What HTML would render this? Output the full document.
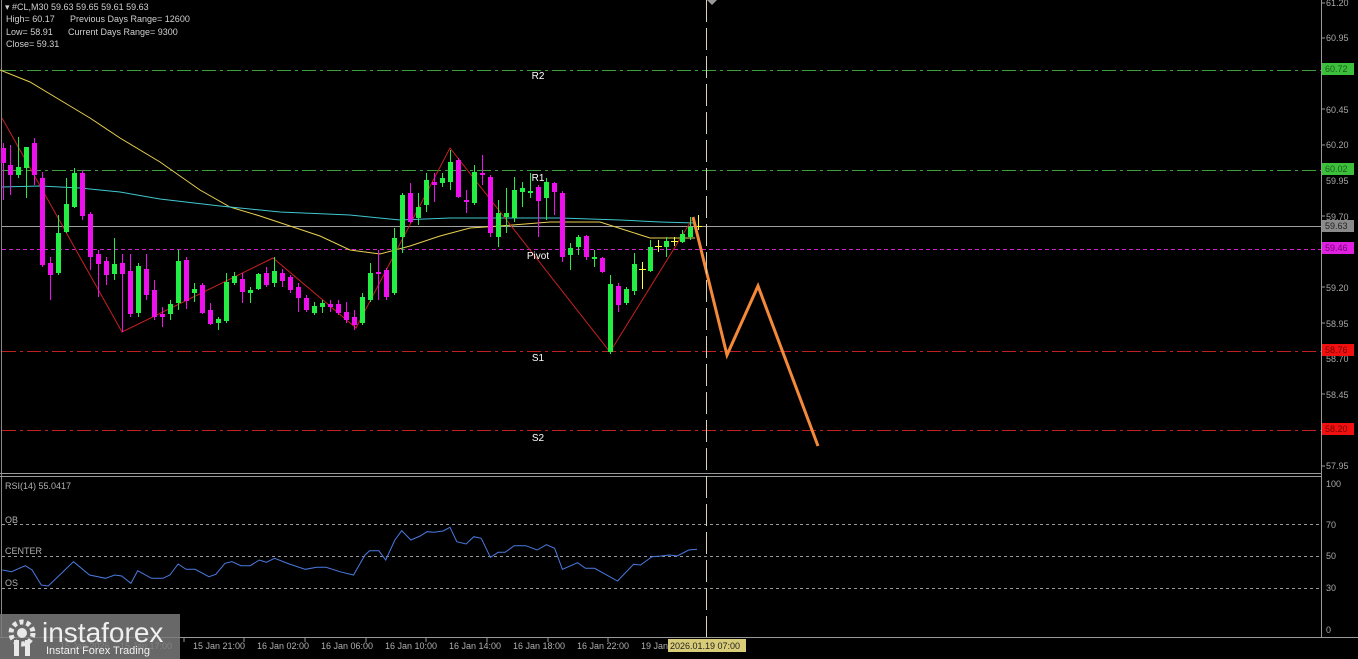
<!DOCTYPE html>
<html><head><meta charset="utf-8">
<style>
html,body{margin:0;padding:0;background:#000;width:1358px;height:659px;overflow:hidden}
svg{display:block;font-family:"Liberation Sans",sans-serif}
</style></head>
<body>
<svg id="s" width="1358" height="659" viewBox="0 0 1358 659" xmlns="http://www.w3.org/2000/svg">
<rect width="1358" height="659" fill="#000"/>
<!-- frames -->
<line x1="1.5" y1="0" x2="1.5" y2="637" stroke="#888"/>
<line x1="1321.5" y1="0" x2="1321.5" y2="637" stroke="#999"/>
<line x1="0" y1="473.5" x2="1322" y2="473.5" stroke="#999"/>
<line x1="0" y1="476.5" x2="1322" y2="476.5" stroke="#999"/>
<line x1="0" y1="637.5" x2="1358" y2="637.5" stroke="#999"/>
<!-- level lines -->
<line x1="2" y1="70.5" x2="1321" y2="70.5" stroke="#3aa03a" stroke-dasharray="14,4,3,4"/>
<line x1="2" y1="170.5" x2="1321" y2="170.5" stroke="#3aa03a" stroke-dasharray="14,4,3,4"/>
<line x1="2" y1="226.5" x2="1321" y2="226.5" stroke="#a0a0a0"/>
<line x1="2" y1="249.5" x2="1321" y2="249.5" stroke="#d020d0" stroke-dasharray="4,3"/>
<line x1="2" y1="351.5" x2="1321" y2="351.5" stroke="#c02020" stroke-dasharray="14,4,3,4"/>
<line x1="2" y1="430.5" x2="1321" y2="430.5" stroke="#c02020" stroke-dasharray="14,4,3,4"/>
<!-- RSI levels -->
<line x1="2" y1="524.5" x2="1321" y2="524.5" stroke="#999" stroke-dasharray="3,3"/>
<line x1="2" y1="556.5" x2="1321" y2="556.5" stroke="#999" stroke-dasharray="3,3"/>
<line x1="2" y1="588.5" x2="1321" y2="588.5" stroke="#999" stroke-dasharray="3,3"/>
<!-- MAs -->
<polyline fill="none" stroke="#e8d050" stroke-width="1" points="0,70 30,82 60,100 90,118 120,138 160,162 200,190 230,207 260,216 290,226 320,236 350,250 380,254 410,246 440,236 470,228 500,226 550,222 600,222 625,230 650,238 695,238"/>
<polyline fill="none" stroke="#40c8d0" stroke-width="1" points="2,187 40,186 80,188 120,192 160,199 220,206 280,212 350,215 400,220 450,218 500,218 560,218 620,220 660,222 695,223"/>
<!-- zigzag -->
<polyline fill="none" stroke="#c82020" stroke-width="1" points="2,118 122,332 273,258 356,328 450,148 610,352 693,218"/>
<g id="candles"></g>
<!-- forecast -->
<polyline fill="none" stroke="#f5893a" stroke-width="3" stroke-linejoin="miter" points="693,217 727,355 758,286 818,446"/>
<!-- vertical line -->
<line x1="706.5" y1="0" x2="706.5" y2="637" stroke="#d8d4b0" stroke-dasharray="22,6"/>
<polygon points="707,0 717,0 712,5" fill="#999"/>
<!-- RSI -->
<polyline id="rsi" fill="none" stroke="#4a7ae0" stroke-width="1"/>
<!-- labels -->
<g fill="#fff" font-size="10" text-anchor="middle">
<text x="538" y="79">R2</text><text x="538" y="181">R1</text><text x="538" y="259">Pivot</text>
<text x="538" y="361">S1</text><text x="538" y="441">S2</text>
</g>
<g fill="#d0d0d0" font-size="9">
<text x="5" y="10">▾ #CL,M30  59.63 59.65 59.61 59.63</text>
<text x="6" y="22">High= 60.17</text><text x="70" y="22">Previous Days Range= 12600</text>
<text x="6" y="35">Low= 58.91</text><text x="68" y="35">Current Days Range= 9300</text>
<text x="6" y="47">Close= 59.31</text>
<text x="5" y="489" fill="#b0b0b0">RSI(14) 55.0417</text>
<text x="5" y="523" fill="#b0b0b0">OB</text>
<text x="5" y="554" fill="#b0b0b0">CENTER</text>
<text x="5" y="586" fill="#b0b0b0">OS</text>
</g>
<!-- price axis -->
<g fill="#a8a8a8" font-size="9">
<text x="1326" y="6">61.20</text><text x="1326" y="41">60.95</text><text x="1326" y="113">60.45</text>
<text x="1326" y="148">60.20</text><text x="1326" y="184">59.95</text><text x="1326" y="220">59.70</text>
<text x="1326" y="291">59.20</text><text x="1326" y="327">58.95</text><text x="1326" y="362">58.70</text>
<text x="1326" y="398">58.45</text><text x="1326" y="469">57.95</text>
<text x="1326" y="487">100</text><text x="1326" y="528">70</text><text x="1326" y="559">50</text>
<text x="1326" y="591">30</text><text x="1326" y="633">0</text>
</g>
<g stroke="#999"><line x1="1322" y1="3" x2="1325" y2="3"/><line x1="1322" y1="38" x2="1325" y2="38"/><line x1="1322" y1="109" x2="1325" y2="109"/><line x1="1322" y1="145" x2="1325" y2="145"/><line x1="1322" y1="216" x2="1325" y2="216"/><line x1="1322" y1="287" x2="1325" y2="287"/><line x1="1322" y1="323" x2="1325" y2="323"/><line x1="1322" y1="394" x2="1325" y2="394"/><line x1="1322" y1="466" x2="1325" y2="466"/></g>
<rect x="1322" y="63" width="32" height="12" fill="#3cc03c"/><text x="1325" y="72" font-size="9" fill="#1a5a1a">60.72</text>
<rect x="1322" y="163" width="32" height="12" fill="#3cc03c"/><text x="1325" y="172" font-size="9" fill="#1a5a1a">60.02</text>
<rect x="1322" y="220" width="32" height="12" fill="#8a8a8a"/><text x="1325" y="229" font-size="9" fill="#222">59.63</text>
<rect x="1322" y="242" width="32" height="12" fill="#e020e0"/><text x="1325" y="251" font-size="9" fill="#700070">59.46</text>
<rect x="1322" y="344" width="32" height="12" fill="#f01010"/><text x="1325" y="353" font-size="9" fill="#700">58.76</text>
<rect x="1322" y="423" width="32" height="12" fill="#f01010"/><text x="1325" y="432" font-size="9" fill="#700">58.20</text>
<!-- time axis -->
<g fill="#b0b0b0" font-size="9">
<text x="193" y="649">15 Jan 21:00</text><text x="257" y="649">16 Jan 02:00</text><text x="321" y="649">16 Jan 06:00</text>
<text x="385" y="649">16 Jan 10:00</text><text x="449" y="649">16 Jan 14:00</text><text x="513" y="649">16 Jan 18:00</text>
<text x="577" y="649">16 Jan 22:00</text><text x="641" y="649">19 Jan</text>
<text x="60" y="649">15 Jan 2026</text><text x="120" y="649">15 Jan 17:00</text>
</g>
<g stroke="#999"><line x1="184" y1="638" x2="184" y2="642"/><line x1="244" y1="638" x2="244" y2="642"/><line x1="305" y1="638" x2="305" y2="642"/><line x1="366" y1="638" x2="366" y2="642"/><line x1="426" y1="638" x2="426" y2="642"/><line x1="487" y1="638" x2="487" y2="642"/><line x1="548" y1="638" x2="548" y2="642"/><line x1="608" y1="638" x2="608" y2="642"/></g>
<rect x="668" y="639" width="78" height="13" fill="#d8cc78"/>
<text x="670" y="649" font-size="9" fill="#222">2026.01.19 07:00</text>
<!-- logo -->
<rect x="0" y="614" width="180" height="45" fill="#7a7a7a" fill-opacity="0.85"/>
<g fill="#e8e8e8">
<circle cx="22" cy="633" r="11" fill="none" stroke="#e8e8e8" stroke-width="5" stroke-dasharray="4,3"/>
<circle cx="22" cy="633" r="5"/>
<rect x="14" y="640" width="5" height="16"/><rect x="25" y="640" width="5" height="16"/>
</g>
<text x="42" y="642" font-size="28" fill="#f0f0f0">instaforex</text>
<text x="46" y="654" font-size="11" fill="#f0f0f0">Instant Forex Trading</text>
</svg>
<script>
var C=[
[3,'m',148,163,143,200],[10,'m',165,175,145,195],[18,'g',167,175,137,178],[26,'g',147,168,147,198],[34,'m',143,175,138,185],
[42,'m',178,265,172,267],[50,'m',263,275,257,300],[58,'g',233,273,215,275],[66,'g',204,232,178,233],[74,'g',173,207,168,208],
[82,'m',173,216,170,220],[90,'m',214,257,212,270],[98,'m',254,264,250,297],[106,'m',261,275,257,285],[114,'g',264,274,238,280],
[122,'m',263,274,254,332],[130,'m',271,314,254,317],[138,'g',266,313,263,317],[146,'m',269,295,254,300],[154,'m',290,317,280,320],
[162,'m',314,317,307,327],[170,'g',304,314,300,320],[178,'g',261,303,250,310],[186,'m',260,301,257,309],[194,'g',289,293,283,302],
[202,'m',285,313,283,314],[210,'m',310,324,303,325],[218,'g',319,323,317,330],[226,'g',282,321,273,323],[234,'g',276,283,272,285],
[242,'m',279,292,273,303],[250,'g',290,293,287,303],[258,'g',274,289,273,290],[266,'m',273,285,267,287],[274,'g',271,283,257,287],
[282,'m',273,281,269,287],[290,'m',277,290,275,293],[298,'m',287,298,283,312],[306,'m',298,310,295,312],[314,'g',306,313,302,315],
[322,'g',303,307,300,313],[330,'m',304,307,300,312],[338,'m',304,313,300,315],[346,'m',312,320,302,323],[354,'m',317,325,310,330],
[362,'g',297,323,293,325],[370,'g',273,300,263,302],[378,'m',272,274,250,300],[386,'m',270,297,268,300],[394,'g',238,293,228,295],
[402,'g',195,237,193,253],[410,'m',193,222,183,223],[418,'g',207,218,193,225],[426,'g',180,205,173,212],[434,'m',182,185,173,202],
[442,'g',178,183,173,187],[450,'g',162,182,150,190],[458,'m',160,197,158,198],[466,'m',200,202,190,213],[474,'g',172,203,165,205],
[482,'m',173,175,155,185],[490,'m',177,233,175,237],[498,'g',213,237,200,247],[506,'g',213,217,188,233],[514,'g',190,218,177,222],
[522,'g',188,192,182,207],[530,'g',191,193,173,198],[538,'m',187,201,185,237],[546,'g',182,198,178,220],[554,'m',183,192,182,215],
[562,'m',193,257,191,262],[570,'g',248,255,243,270],[578,'g',237,247,235,255],[586,'m',236,257,235,260],[594,'g',257,259,250,267],
[602,'m',258,272,257,273],[610,'g',284,352,275,354],[618,'m',286,305,283,312],[626,'g',289,303,287,305],[634,'g',264,291,253,295],
[642,'y',269,269,262,289],[650,'g',247,271,240,272],[658,'y',246,246,240,252],[666,'g',241,247,237,257],[674,'y',241,241,237,246],
[682,'g',234,242,230,243],[690,'g',227,237,217,240],[698,'y',226,226,215,230]];
var ns="http://www.w3.org/2000/svg",g=document.getElementById('candles'),h='';
C.forEach(function(c){var col=c[1]=='g'?'#22ee44':c[1]=='m'?'#ee11ee':'#ffff33';
h+='<line x1="'+(c[0]+0.5)+'" y1="'+c[4]+'" x2="'+(c[0]+0.5)+'" y2="'+c[5]+'" stroke="'+col+'"/>';
if(c[1]=='y'){h+='<line x1="'+(c[0]-3)+'" y1="'+(c[2]+0.5)+'" x2="'+(c[0]+4)+'" y2="'+(c[2]+0.5)+'" stroke="'+col+'"/>';}
else h+='<rect x="'+(c[0]-2)+'" y="'+c[2]+'" width="5" height="'+Math.max(2,c[3]-c[2])+'" fill="'+col+'"/>';});
g.innerHTML=h;
var R=[[5,300],[25,305],[55,287],[70,300],[90,345],[105,348],[130,315],[160,275],[195,315],[230,325],[250,315],[265,318],[285,340],[300,302],[330,325],[355,325],[370,315],[388,282],[405,298],[425,298],[455,320],[470,313],[490,280],[505,275],[525,287],[545,287],[565,270],[580,277],[598,265],[630,282],[665,298],[690,292],[710,292],[740,305],[770,315],[795,255],[805,242],[825,242],[840,270],[860,210],[875,182],[895,210],[915,198],[930,185],[945,187],[965,183],[980,172],[995,215],[1015,222],[1032,200],[1048,205],[1068,262],[1085,247],[1100,247],[1120,227],[1145,227],[1170,240],[1190,224],[1208,235],[1225,298],[1258,278],[1275,295],[1295,295],[1345,333],[1380,283],[1395,285],[1420,260],[1440,258],[1458,255],[1475,258],[1500,240],[1518,238]];
document.getElementById('rsi').setAttribute('points',R.map(function(p){return (p[0]/2.178).toFixed(1)+','+(470+p[1]/3).toFixed(1)}).join(' '));
</script>
</body></html>
